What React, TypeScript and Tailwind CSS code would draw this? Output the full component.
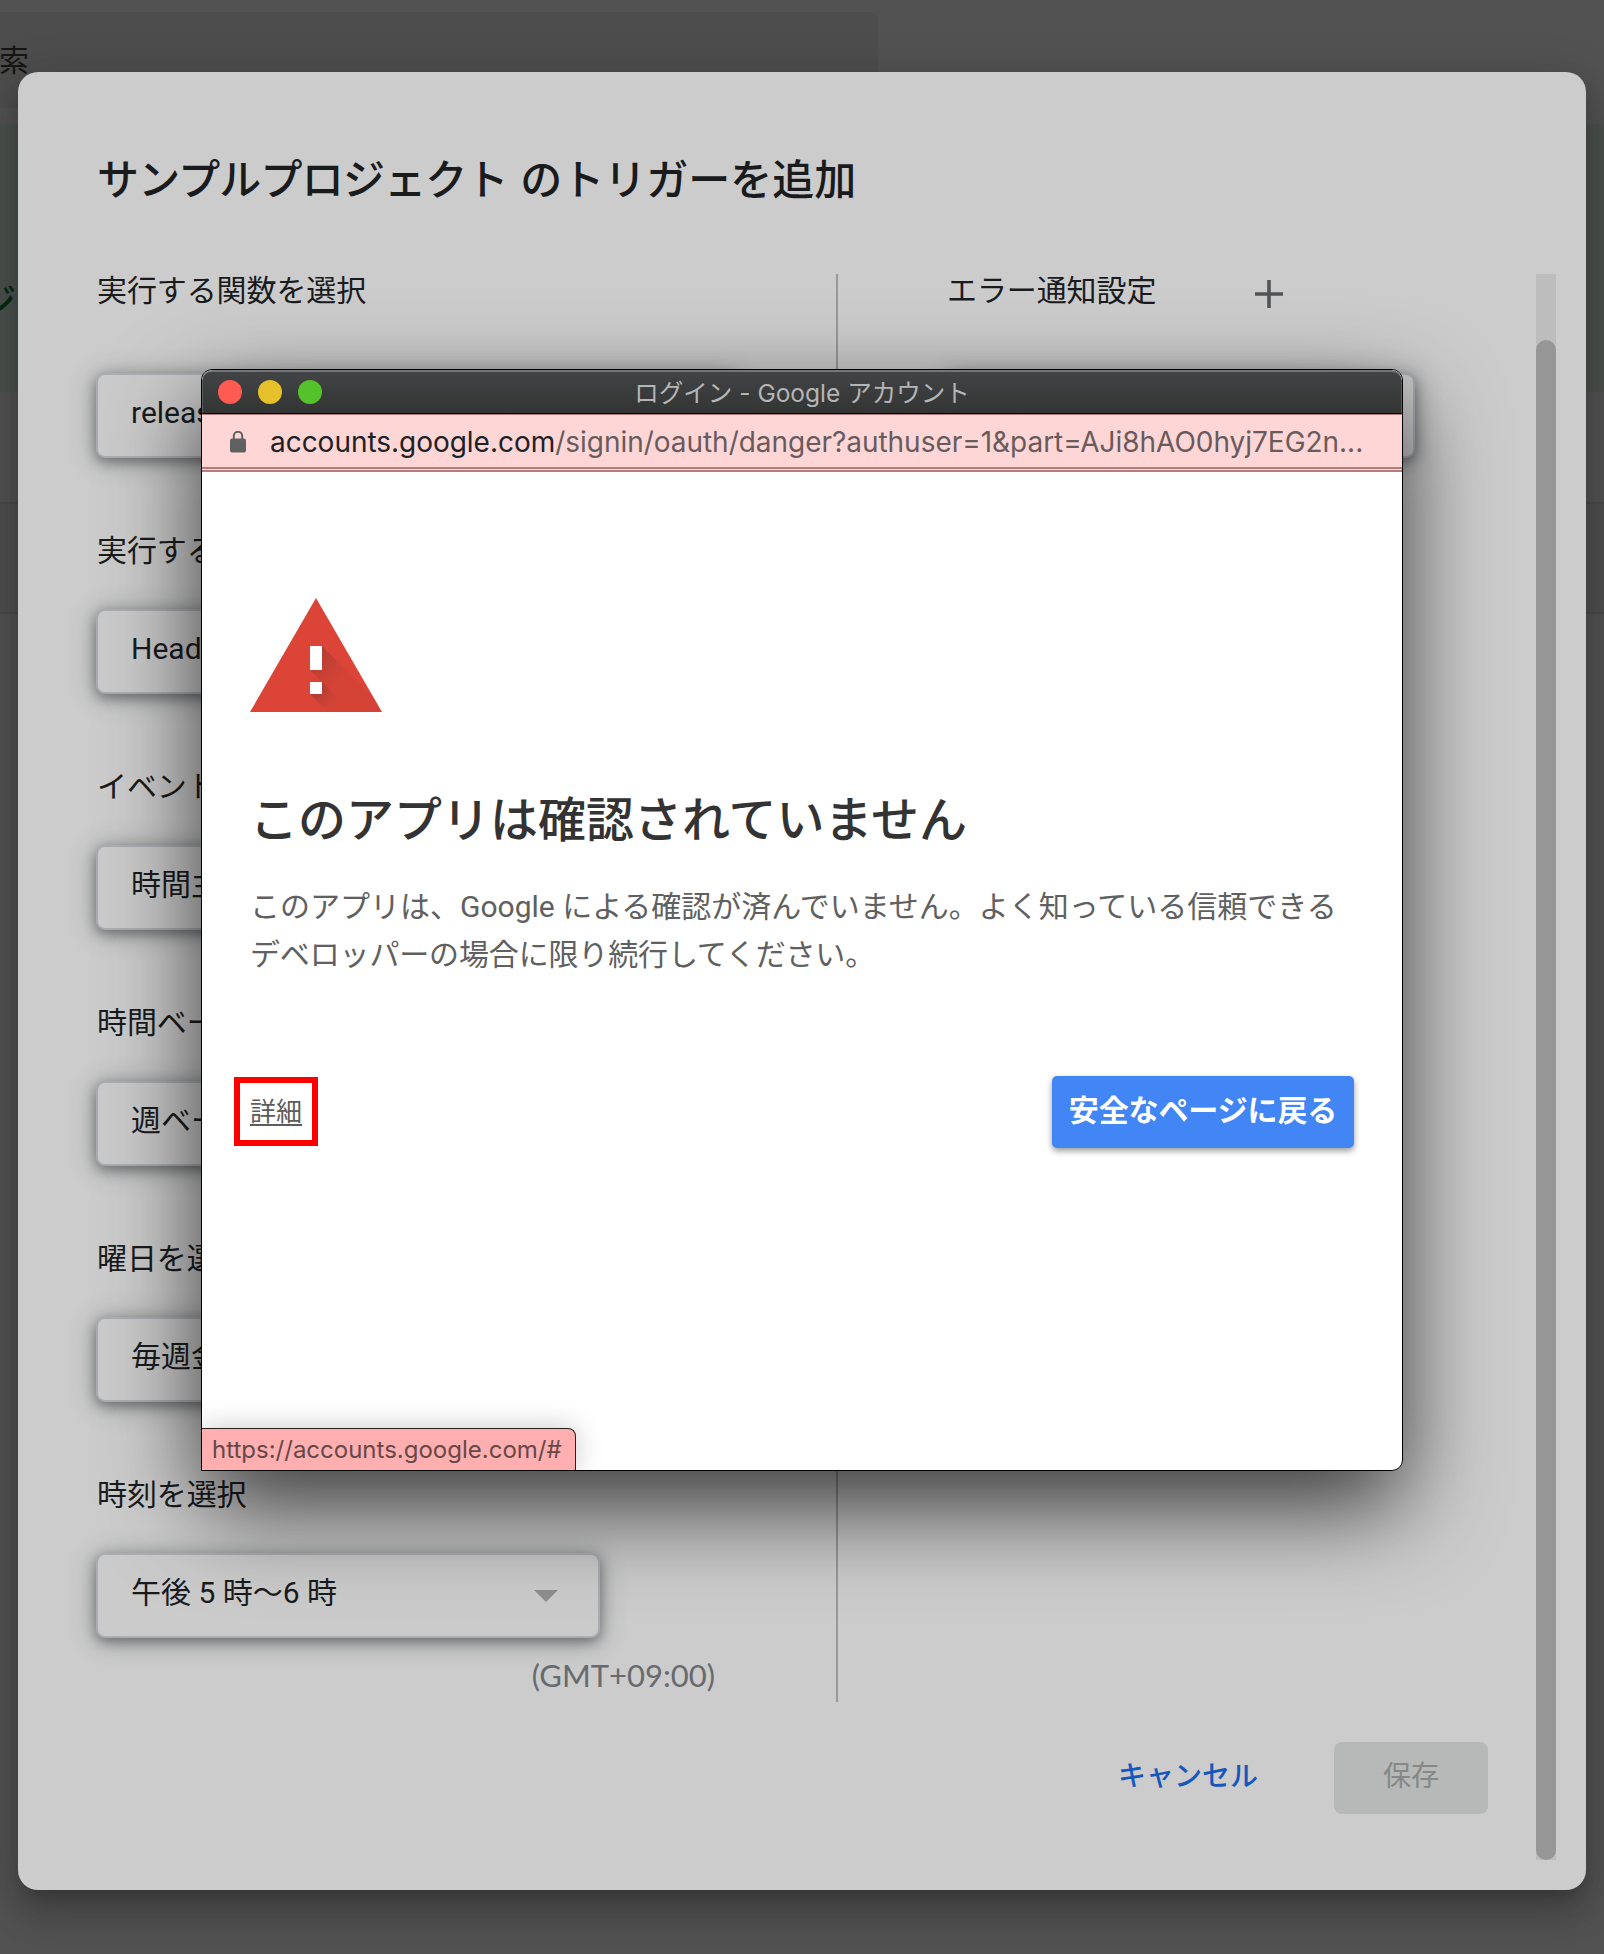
import React from "react";

const jp = "font-['Roboto','Noto_Sans_CJK_JP',sans-serif]";
const ui = "font-['Inter','Noto_Sans_CJK_JP',sans-serif]";

function Select({ children, className = "", arrow = false }: { children?: React.ReactNode; className?: string; arrow?: boolean }) {
  return (
    <div
      className={`flex h-[85px] items-center justify-between rounded-[9px] border-2 border-[#abadb2] bg-[#cbcbcb] pb-[5px] pl-[33px] pr-[40px] text-[30px] leading-none text-[#1a1b1d] shadow-[0_4px_12px_rgba(60,64,67,0.5),0_3px_26px_rgba(60,64,67,0.42)] ${className}`}
    >
      <span className="whitespace-nowrap">{children}</span>
      {arrow && (
        <svg width="24" height="12" viewBox="0 0 24 12" className="mt-[6px]">
          <path d="M0 0h24L12 12z" fill="#8e8e8e" />
        </svg>
      )}
    </div>
  );
}

function Label({ children }: { children: React.ReactNode }) {
  return <div className="whitespace-nowrap text-[30px] leading-[40px] tracking-[-0.1px] text-[#1a1b1d]">{children}</div>;
}

const fields = [
  { label: "実行するデプロイを選択", value: "Head" },
  { label: "イベントのソースを選択", value: "時間主導型" },
  { label: "時間ベースのトリガーのタイプを選択", value: "週ベースのタイマー" },
  { label: "曜日を選択", value: "毎週金曜日" },
  { label: "時刻を選択", value: "午後 5 時〜6 時" },
];

function Backdrop() {
  return (
    <div className="absolute inset-0 flex flex-col overflow-hidden pt-[12px]">
      <div className="flex h-[96px] w-[878px] items-center rounded-r-[8px] bg-[#4d4d4d]">
        <span className="-ml-[1px] mt-[2px] text-[30px] leading-none text-[#161616]">索</span>
      </div>
      <div className="mt-[16px] flex h-[268px] items-center bg-[#4a504c]">
        <span className="-ml-[20px] mt-[90px] text-[36px] font-medium leading-none text-[#062a10]">ジ</span>
      </div>
      <div className="mt-[110px] h-[112px] border-y-2 border-[#484848] bg-[#4f4f4f]" />
    </div>
  );
}

function TriggerDialog() {
  return (
    <div className="absolute left-[18px] top-[72px] flex h-[1818px] w-[1568px] flex-col rounded-[20px] bg-[#cccccc] pl-[79px] pt-[79px] shadow-[0_11px_15px_-7px_rgba(0,0,0,0.2),0_24px_38px_3px_rgba(0,0,0,0.14),0_9px_46px_8px_rgba(0,0,0,0.12)]">
      <h1 className="h-[123px] whitespace-nowrap text-[42px] font-medium leading-[60px] text-[#1a1b1d]">
        <span className="tracking-[-0.8px]">サンプルプロジェクト</span> <span className="ml-[2px]">のトリガーを追加</span>
      </h1>
      <div className="flex">
        <div className="flex w-[1439px] flex-col">
          <div className="flex h-[1428px]">
            <div className="flex w-[739px] flex-col">
              <div className="-mt-[3px] h-[102px]">
                <Label>実行する関数を選択</Label>
              </div>
              <Select className="-ml-px w-[640px]">releaseReminder</Select>
              <div className="mt-[73px] flex flex-col gap-[73px]">
                {fields.map((f, i) => (
                  <div key={f.label} className="flex flex-col gap-[38px]">
                    <Label>{f.label}</Label>
                    <Select className="-ml-px w-[504px]" arrow={i === 4}>
                      {f.value}
                    </Select>
                  </div>
                ))}
              </div>
              <div className="mt-[17px] w-[618px] text-right font-['Lato',sans-serif] text-[31px] leading-[40px] text-[#676a6f]">(GMT+09:00)</div>
            </div>
            <div className="w-[2px] bg-[#97989b]" />
            <div className="ml-[109px] flex flex-col">
              <div className="-mt-[3px] flex h-[102px] items-start">
                <Label>エラー通知設定</Label>
                <svg width="28" height="28" viewBox="0 0 28 28" className="ml-[99px] mt-[9px]">
                  <path d="M14 0v28M0 14h28" stroke="#535458" strokeWidth="3.6" />
                </svg>
              </div>
              <Select className="w-[468px]">毎日通知を受け取る</Select>
            </div>
          </div>
          <div className="mt-[40px] flex justify-end gap-[76px] pr-[48px]">
            <div className="flex h-[72px] items-center pb-[3px] text-[28px] font-medium leading-none text-[#1558bd]">キャンセル</div>
            <div className="flex h-[72px] w-[154px] items-center justify-center rounded-[8px] bg-[#b6b9b7] pb-[3px] text-[28px] leading-none text-[#858886]">保存</div>
          </div>
        </div>
        <div className="flex h-[1586px] w-[20px] flex-col bg-[#bdbdbd] pt-[66px]">
          <div className="grow rounded-full bg-[#969696]" />
        </div>
      </div>
    </div>
  );
}

function WarningIcon() {
  return (
    <svg width="132" height="114" viewBox="0 0 132 114" className="block">
      <defs>
        <linearGradient id="barShade" gradientUnits="userSpaceOnUse" x1="66" y1="60" x2="92" y2="86">
          <stop offset="0" stopColor="#3e2723" stopOpacity="0.24" />
          <stop offset="0.6" stopColor="#3e2723" stopOpacity="0.08" />
          <stop offset="1" stopColor="#3e2723" stopOpacity="0.04" />
        </linearGradient>
        <linearGradient id="dotShade" gradientUnits="userSpaceOnUse" x1="66" y1="90" x2="84" y2="108">
          <stop offset="0" stopColor="#3e2723" stopOpacity="0.24" />
          <stop offset="0.6" stopColor="#3e2723" stopOpacity="0.06" />
          <stop offset="1" stopColor="#3e2723" stopOpacity="0" />
        </linearGradient>
      </defs>
      <path d="M66 0l66 114H0z" fill="#db4437" />
      <path d="M72 48l51.700 51.700L132 114H78L60 96l12-12L60 72z" fill="url(#barShade)" />
      <path d="M72 84l30 30H78L60 96z" fill="url(#dotShade)" />
      <path d="M60 48h12v24H60zM60 84h12v12H60z" fill="#fff" />
    </svg>
  );
}

function LoginWindow() {
  return (
    <div className="absolute left-[201px] top-[369px] flex h-[1102px] w-[1202px] flex-col rounded-b-[12px] rounded-t-[11px] shadow-[0_36px_94px_rgba(0,0,0,0.72)]">
      <div className="flex h-full flex-col overflow-hidden rounded-[11px] rounded-bl-none border border-black bg-white">
        <div className="relative flex h-[44px] shrink-0 items-center justify-center rounded-t-[10px] border-x border-b border-t-2 border-b-black border-x-[#5c5d5e] border-t-[#747576] bg-gradient-to-b from-[#424345] to-[#333534]">
          <div className="absolute left-[15px] top-[8px] flex gap-[16px]">
            <span className="size-[24px] rounded-full bg-[#ff5b53]" />
            <span className="size-[24px] rounded-full bg-[#e6c02a]" />
            <span className="size-[24px] rounded-full bg-[#53c22b]" />
          </div>
          <span className={`${ui} mt-px whitespace-nowrap text-[24.5px] leading-none text-[#b4b5b5]`}>ログイン - Google アカウント</span>
        </div>
        <div className="flex h-[58px] shrink-0 flex-col border-b-2 border-t border-[#b57c7c] bg-[#ffd6d6] pb-px">
          <div className="flex grow items-center border-b-2 border-[#b57c7c] pl-[28px]">
            <svg width="16" height="22" viewBox="0 0 16 22" className="mt-px">
              <rect x="0" y="7.500" width="16" height="14" rx="2" fill="#5f6062" />
              <path d="M3.800 9V5a4.200 4.200 0 0 1 8.400 0v4" fill="none" stroke="#5f6062" strokeWidth="2" />
            </svg>
            <span className={`${ui} ml-[24px] mt-[2px] whitespace-nowrap text-[28px] leading-none tracking-[-0.03px] text-[#685b5d]`}>
              <span className="text-[#202124]">accounts.google.com</span>/signin/oauth/danger?authuser=1&amp;part=AJi8hAO0hyj7EG2n...
            </span>
          </div>
        </div>
        <div className="relative flex grow flex-col px-[48px] pt-[126px]">
          <WarningIcon />
          <h2 className="mt-[77px] whitespace-nowrap text-[48px] font-medium leading-[64px] text-[#333]">このアプリは確認されていません</h2>
          <p className="mt-[30px] whitespace-nowrap text-[30px] leading-[48px] text-[#606060]">
            このアプリは、Google による確認が済んでいません。よく知っている信頼できる
            <br />
            <span className="tracking-[-0.15px]">デベロッパーの場合に限り続行してください。</span>
          </p>
          <div className="mt-[97px] flex items-start justify-between">
            <div className="-ml-[16px] mt-px flex h-[69px] w-[84px] items-center justify-center border-[6px] border-[#ff0000] pt-[3px]">
              <span className="border-b-2 border-[#5c5c5c] text-[26px] leading-[24px] text-[#5c5c5c]">詳細</span>
            </div>
            <div className="flex h-[72px] w-[302px] items-center justify-center rounded-[5px] bg-[#4285f4] pb-[2px] text-[30px] font-bold leading-none tracking-[-0.1px] text-white shadow-[0_3px_6px_rgba(0,0,0,0.4)]">
              安全なページに戻る
            </div>
          </div>
          <div className={`${ui} absolute bottom-0 left-0 flex h-[42px] w-[374px] items-center rounded-tr-[8px] border-r border-t border-[#2b2020] bg-[#ffafaf] pl-[10px] pt-px text-[24px] leading-none text-[#664848] shadow-[0_0_28px_rgba(0,0,0,0.22)]`}>
            https://accounts.google.com/#
          </div>
        </div>
      </div>
    </div>
  );
}

export default function App() {
  return (
    <div className={`${jp} relative h-[1954px] w-[1604px] overflow-hidden bg-[#525252]`}>
      <Backdrop />
      <TriggerDialog />
      <LoginWindow />
    </div>
  );
}
